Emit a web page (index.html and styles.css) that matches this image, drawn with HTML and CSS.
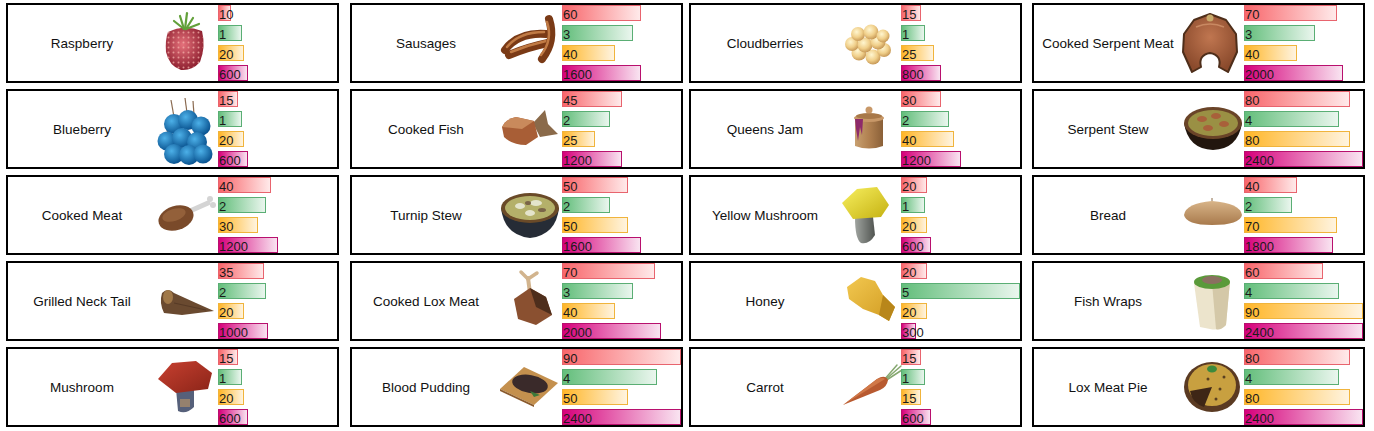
FILE: index.html
```html
<!DOCTYPE html>
<html>
<head>
<meta charset="utf-8">
<title>Food stats</title>
<link rel="stylesheet" href="styles.css">
</head>
<body>
<main class="board">

<!-- Row 1 -->
<section class="card">
  <div class="name">Raspberry</div>
  <div class="pic"><svg viewBox="0 0 62 76">
    <defs>
      <radialGradient id="g-rasp" cx="45%" cy="40%" r="60%"><stop offset="0" stop-color="#e4707a"/><stop offset="1" stop-color="#8e2030"/></radialGradient>
      <pattern id="p-rasp" width="5" height="5" patternUnits="userSpaceOnUse"><circle cx="2.5" cy="2.5" r="1" fill="#f3b0a8"/></pattern>
    </defs>
    <path d="M12 27 Q28 19 46 26 Q50 42 44 57 Q36 66 25 65 Q13 61 10 47 Q9 35 12 27Z" fill="url(#g-rasp)"/>
    <path d="M12 27 Q28 19 46 26 Q50 42 44 57 Q36 66 25 65 Q13 61 10 47 Q9 35 12 27Z" fill="url(#p-rasp)" opacity=".75"/>
    <g stroke="#62a03a" stroke-width="2.2" stroke-linecap="round" fill="none">
      <path d="M28 24 L18 16"/><path d="M28 24 L24 11"/><path d="M29 24 L31 8"/><path d="M30 24 L37 13"/><path d="M30 24 L43 19"/>
    </g>
  </svg></div>
  <div class="bars">
    <div class="bar r" style="width:13.2px">10</div>
    <div class="bar g" style="width:23.8px">1</div>
    <div class="bar y" style="width:26.4px">20</div>
    <div class="bar p" style="width:29.8px">600</div>
  </div>
</section>

<section class="card">
  <div class="name">Sausages</div>
  <div class="pic"><svg viewBox="0 0 62 76">
    <g fill="none" stroke-linecap="round">
      <path d="M5 45 Q18 27 46 29" stroke="#7a3a16" stroke-width="8"/>
      <path d="M7 42 Q19 27 44 27" stroke="#c07a44" stroke-width="2.5"/>
      <path d="M9 50 Q28 42 48 38" stroke="#7a3a16" stroke-width="8"/>
      <path d="M11 47 Q28 40 46 36" stroke="#c07a44" stroke-width="2.5"/>
      <path d="M42 54 Q56 36 49 14" stroke="#7a3a16" stroke-width="8"/>
      <path d="M41 50 Q53 35 47 17" stroke="#c07a44" stroke-width="2.5"/>
    </g>
  </svg></div>
  <div class="bars">
    <div class="bar r" style="width:79.3px">60</div>
    <div class="bar g" style="width:71.4px">3</div>
    <div class="bar y" style="width:52.9px">40</div>
    <div class="bar p" style="width:79.3px">1600</div>
  </div>
</section>

<section class="card">
  <div class="name">Cloudberries</div>
  <div class="pic"><svg viewBox="0 0 62 76">
    <defs>
      <radialGradient id="g-cloud" cx="40%" cy="35%" r="65%"><stop offset="0" stop-color="#fff6d0"/><stop offset=".6" stop-color="#f0cf8a"/><stop offset="1" stop-color="#c89a58"/></radialGradient>
    </defs>
    <g fill="url(#g-cloud)">
      <circle cx="20" cy="48" r="7.5"/><circle cx="34" cy="52" r="7.5"/><circle cx="45" cy="45" r="7"/>
      <circle cx="13" cy="39" r="7"/><circle cx="26" cy="40" r="7.5"/><circle cx="39" cy="37" r="7.5"/>
      <circle cx="19" cy="29" r="7"/><circle cx="32" cy="27" r="7.5"/><circle cx="44" cy="31" r="6.5"/>
    </g>
  </svg></div>
  <div class="bars">
    <div class="bar r" style="width:19.8px">15</div>
    <div class="bar g" style="width:23.8px">1</div>
    <div class="bar y" style="width:33.1px">25</div>
    <div class="bar p" style="width:39.7px">800</div>
  </div>
</section>

<section class="card">
  <div class="name">Cooked Serpent Meat</div>
  <div class="pic"><svg viewBox="0 0 62 76">
    <defs>
      <radialGradient id="g-serp" cx="50%" cy="40%" r="60%"><stop offset="0" stop-color="#c07650"/><stop offset="1" stop-color="#8a4a2c"/></radialGradient>
    </defs>
    <path d="M28 9 L44 15 L54 29 L55 47 L46 67 L37 62 Q40 50 28 48 Q16 50 19 62 L10 67 L1 47 L2 29 L12 15 Z" fill="url(#g-serp)" stroke="#4e2e1a" stroke-width="2" stroke-linejoin="round"/>
    <path d="M14 22 Q28 16 42 22" fill="none" stroke="#d59870" stroke-width="1.5" opacity=".7"/>
    <circle cx="28" cy="13" r="3.5" fill="#c8aa6a"/>
  </svg></div>
  <div class="bars">
    <div class="bar r" style="width:92.6px">70</div>
    <div class="bar g" style="width:71.4px">3</div>
    <div class="bar y" style="width:52.9px">40</div>
    <div class="bar p" style="width:99.2px">2000</div>
  </div>
</section>

<!-- Row 2 -->
<section class="card">
  <div class="name">Blueberry</div>
  <div class="pic"><svg viewBox="0 0 62 76">
    <defs>
      <radialGradient id="g-blue" cx="38%" cy="35%" r="65%"><stop offset="0" stop-color="#4cb0e8"/><stop offset="1" stop-color="#0b5592"/></radialGradient>
    </defs>
    <g stroke="#8a6a50" stroke-width="1.2">
      <path d="M18 26 L15 9"/><path d="M31 22 L29 7"/><path d="M38 24 L37 10"/><path d="M12 42 L9 32"/><path d="M40 48 L38 38"/>
    </g>
    <g fill="url(#g-blue)">
      <circle cx="18" cy="33" r="10"/><circle cx="32" cy="29" r="10"/><circle cx="45" cy="35" r="9.5"/>
      <circle cx="11" cy="50" r="9.5"/><circle cx="26" cy="47" r="10"/><circle cx="41" cy="51" r="10"/>
      <circle cx="18" cy="63" r="10"/><circle cx="33" cy="64" r="10"/><circle cx="47" cy="63" r="9.5"/>
    </g>
  </svg></div>
  <div class="bars">
    <div class="bar r" style="width:19.8px">15</div>
    <div class="bar g" style="width:23.8px">1</div>
    <div class="bar y" style="width:26.4px">20</div>
    <div class="bar p" style="width:29.8px">600</div>
  </div>
</section>

<section class="card">
  <div class="name">Cooked Fish</div>
  <div class="pic"><svg viewBox="0 0 62 76">
    <path d="M33 32 L45 19 L48 33 L58 43 L40 46 Z" fill="#8a6a4a"/>
    <path d="M2 36 Q6 28 16 26 L34 30 L38 46 L26 54 Q12 54 4 46 Z" fill="#a85e36"/>
    <path d="M2 36 Q6 28 16 26 L34 30 L22 38 Z" fill="#c98a5c"/>
  </svg></div>
  <div class="bars">
    <div class="bar r" style="width:59.5px">45</div>
    <div class="bar g" style="width:47.6px">2</div>
    <div class="bar y" style="width:33.1px">25</div>
    <div class="bar p" style="width:59.5px">1200</div>
  </div>
</section>

<section class="card">
  <div class="name">Queens Jam</div>
  <div class="pic"><svg viewBox="0 0 62 76">
    <defs>
      <linearGradient id="g-jam" x1="0" x2="1"><stop offset="0" stop-color="#c8a070"/><stop offset=".5" stop-color="#b08050"/><stop offset="1" stop-color="#8a6038"/></linearGradient>
    </defs>
    <path d="M16 27 L44 27 L44 55 Q30 60 16 55 Z" fill="url(#g-jam)"/>
    <ellipse cx="30" cy="27" rx="15" ry="4" fill="#c89868"/>
    <ellipse cx="30" cy="25" rx="13" ry="3" fill="#a87848"/>
    <circle cx="30" cy="19" r="3.5" fill="#c89868"/>
    <path d="M16 28 L24 28 L23 44 L21 36 L19 50 L17 38 Z" fill="#8e2a6a"/>
  </svg></div>
  <div class="bars">
    <div class="bar r" style="width:39.7px">30</div>
    <div class="bar g" style="width:47.6px">2</div>
    <div class="bar y" style="width:52.9px">40</div>
    <div class="bar p" style="width:59.5px">1200</div>
  </div>
</section>

<section class="card">
  <div class="name">Serpent Stew</div>
  <div class="pic"><svg viewBox="0 0 62 76">
    <path d="M2 32 Q6 58 31 59 Q56 58 60 32 Z" fill="#22160e"/>
    <ellipse cx="31" cy="32" rx="29" ry="16" fill="#6a4428"/>
    <ellipse cx="31" cy="32" rx="25" ry="13" fill="#9a9044"/>
    <g fill="#a8603a">
      <ellipse cx="20" cy="28" rx="5" ry="3"/><ellipse cx="34" cy="25" rx="5" ry="3"/><ellipse cx="42" cy="33" rx="5" ry="3"/><ellipse cx="26" cy="37" rx="5" ry="3"/>
    </g>
  </svg></div>
  <div class="bars">
    <div class="bar r" style="width:105.8px">80</div>
    <div class="bar g" style="width:95.2px">4</div>
    <div class="bar y" style="width:105.8px">80</div>
    <div class="bar p" style="width:119px">2400</div>
  </div>
</section>

<!-- Row 3 -->
<section class="card">
  <div class="name">Cooked Meat</div>
  <div class="pic"><svg viewBox="0 0 62 76">
    <g stroke="#d4d4d4" stroke-linecap="round">
      <path d="M34 34 L52 26" stroke-width="5"/>
    </g>
    <circle cx="54" cy="22" r="3" fill="#d4d4d4"/><circle cx="57" cy="28" r="3" fill="#d4d4d4"/>
    <ellipse cx="20" cy="41" rx="18" ry="12" transform="rotate(-18 20 41)" fill="#7a4a2a"/>
    <ellipse cx="18" cy="38" rx="12" ry="6" transform="rotate(-18 18 38)" fill="#93603a"/>
  </svg></div>
  <div class="bars">
    <div class="bar r" style="width:52.9px">40</div>
    <div class="bar g" style="width:47.6px">2</div>
    <div class="bar y" style="width:39.7px">30</div>
    <div class="bar p" style="width:59.5px">1200</div>
  </div>
</section>

<section class="card">
  <div class="name">Turnip Stew</div>
  <div class="pic"><svg viewBox="0 0 62 76">
    <path d="M1 31 Q4 58 30 61 Q56 58 59 31 Z" fill="#262c36"/>
    <ellipse cx="30" cy="31" rx="29" ry="15" fill="#6a4a28"/>
    <ellipse cx="30" cy="31" rx="25" ry="12" fill="#b4b06a"/>
    <g fill="#e4e4cc">
      <ellipse cx="20" cy="29" rx="5" ry="3"/><ellipse cx="36" cy="26" rx="6" ry="3"/><ellipse cx="30" cy="36" rx="5" ry="3"/>
    </g>
    <g fill="#7a6448"><ellipse cx="28" cy="26" rx="3" ry="2"/><ellipse cx="42" cy="33" rx="4" ry="2"/></g>
  </svg></div>
  <div class="bars">
    <div class="bar r" style="width:66.1px">50</div>
    <div class="bar g" style="width:47.6px">2</div>
    <div class="bar y" style="width:66.1px">50</div>
    <div class="bar p" style="width:79.3px">1600</div>
  </div>
</section>

<section class="card">
  <div class="name">Yellow Mushroom</div>
  <div class="pic"><svg viewBox="0 0 62 76">
    <defs>
      <linearGradient id="g-ymush" x1="0" y1="0" x2="1" y2="1"><stop offset="0" stop-color="#f8f060"/><stop offset="1" stop-color="#c4b010"/></linearGradient>
      <linearGradient id="g-ystem" x1="0" x2="1"><stop offset="0" stop-color="#a0a4a0"/><stop offset="1" stop-color="#505450"/></linearGradient>
    </defs>
    <path d="M16 40 L34 40 L36 58 Q30 68 22 66 Q16 62 16 40Z" fill="url(#g-ystem)"/>
    <path d="M3 26 L18 12 L38 10 L50 28 L42 40 L14 42 Z" fill="url(#g-ymush)"/>
  </svg></div>
  <div class="bars">
    <div class="bar r" style="width:26.4px">20</div>
    <div class="bar g" style="width:23.8px">1</div>
    <div class="bar y" style="width:26.4px">20</div>
    <div class="bar p" style="width:29.8px">600</div>
  </div>
</section>

<section class="card">
  <div class="name">Bread</div>
  <div class="pic"><svg viewBox="0 0 62 76">
    <defs>
      <linearGradient id="g-bread" x1="0" y1="0" x2="0" y2="1"><stop offset="0" stop-color="#d8b488"/><stop offset="1" stop-color="#a87a4c"/></linearGradient>
    </defs>
    <path d="M2 38 Q4 26 30 24 Q58 26 60 38 Q58 48 30 48 Q4 48 2 38 Z" fill="url(#g-bread)"/>
    <path d="M30 24 L30 21" stroke="#8a6a48" stroke-width="1"/>
  </svg></div>
  <div class="bars">
    <div class="bar r" style="width:52.9px">40</div>
    <div class="bar g" style="width:47.6px">2</div>
    <div class="bar y" style="width:92.6px">70</div>
    <div class="bar p" style="width:89.3px">1800</div>
  </div>
</section>

<!-- Row 4 -->
<section class="card">
  <div class="name">Grilled Neck Tail</div>
  <div class="pic"><svg viewBox="0 0 62 76">
    <path d="M6 30 Q12 24 18 30 L40 40 L58 48 L26 52 L8 50 Q3 40 6 30Z" fill="#6a4a30"/>
    <ellipse cx="12" cy="34" rx="5" ry="7" fill="#a07848"/>
    <path d="M18 40 L50 47" stroke="#4a3020" stroke-width="1" opacity=".6"/>
  </svg></div>
  <div class="bars">
    <div class="bar r" style="width:46.3px">35</div>
    <div class="bar g" style="width:47.6px">2</div>
    <div class="bar y" style="width:26.4px">20</div>
    <div class="bar p" style="width:49.6px">1000</div>
  </div>
</section>

<section class="card">
  <div class="name">Cooked Lox Meat</div>
  <div class="pic"><svg viewBox="0 0 62 76">
    <g stroke="#d2b48e" stroke-linecap="round" fill="none">
      <path d="M30 30 L28 15" stroke-width="4"/>
      <path d="M28 16 L21 9" stroke-width="3.5"/>
      <path d="M28 16 L37 10" stroke-width="3.5"/>
    </g>
    <path d="M14 36 L30 25 L46 34 L52 52 L36 62 L18 56 Z" fill="#8a5030"/>
    <path d="M30 25 L46 34 L52 52 L36 44 Z" fill="#4e2e1c"/>
  </svg></div>
  <div class="bars">
    <div class="bar r" style="width:92.6px">70</div>
    <div class="bar g" style="width:71.4px">3</div>
    <div class="bar y" style="width:52.9px">40</div>
    <div class="bar p" style="width:99.2px">2000</div>
  </div>
</section>

<section class="card">
  <div class="name">Honey</div>
  <div class="pic"><svg viewBox="0 0 62 76">
    <defs>
      <linearGradient id="g-honey" x1="0" y1="0" x2="1" y2="1"><stop offset="0" stop-color="#f2c850"/><stop offset="1" stop-color="#d09a20"/></linearGradient>
    </defs>
    <path d="M8 24 L22 14 L36 18 L44 32 L56 44 L50 58 L40 52 L24 46 L10 36 Z" fill="url(#g-honey)"/>
    <path d="M44 32 L56 44 L50 58 L40 52 Z" fill="#b8861a"/>
  </svg></div>
  <div class="bars">
    <div class="bar r" style="width:26.4px">20</div>
    <div class="bar g" style="width:119px">5</div>
    <div class="bar y" style="width:26.4px">20</div>
    <div class="bar p" style="width:14.9px">300</div>
  </div>
</section>

<section class="card">
  <div class="name">Fish Wraps</div>
  <div class="pic"><svg viewBox="0 0 62 76">
    <path d="M12 20 L48 18 L44 62 Q38 68 28 66 L18 64 Z" fill="#ece4cc"/>
    <path d="M30 20 L48 18 L44 62 Q38 68 34 66 Z" fill="#d4c8a8"/>
    <ellipse cx="30" cy="19" rx="18" ry="7" fill="#5a9a3a"/>
    <ellipse cx="30" cy="17" rx="10" ry="4" fill="#8a7060"/>
  </svg></div>
  <div class="bars">
    <div class="bar r" style="width:79.3px">60</div>
    <div class="bar g" style="width:95.2px">4</div>
    <div class="bar y" style="width:119px">90</div>
    <div class="bar p" style="width:119px">2400</div>
  </div>
</section>

<!-- Row 5 -->
<section class="card">
  <div class="name">Mushroom</div>
  <div class="pic"><svg viewBox="0 0 62 76">
    <defs>
      <linearGradient id="g-rmush" x1="0" y1="0" x2="1" y2="1"><stop offset="0" stop-color="#c84030"/><stop offset="1" stop-color="#8a2418"/></linearGradient>
    </defs>
    <path d="M20 40 L38 40 L38 58 Q30 66 22 62 Z" fill="#56607a"/>
    <path d="M24 50 L34 50 L34 58 L24 58 Z" fill="#b0906a" opacity=".7"/>
    <path d="M2 30 L16 14 L40 12 L56 24 L52 40 L20 44 Z" fill="url(#g-rmush)"/>
  </svg></div>
  <div class="bars">
    <div class="bar r" style="width:19.8px">15</div>
    <div class="bar g" style="width:23.8px">1</div>
    <div class="bar y" style="width:26.4px">20</div>
    <div class="bar p" style="width:29.8px">600</div>
  </div>
</section>

<section class="card">
  <div class="name">Blood Pudding</div>
  <div class="pic"><svg viewBox="0 0 62 76">
    <path d="M0 40 L24 18 L58 34 L34 56 Z" fill="#c4904e"/>
    <path d="M0 40 L34 56 L34 58 L0 42 Z" fill="#8a5a2c"/>
    <ellipse cx="30" cy="35" rx="18" ry="9" transform="rotate(10 30 35)" fill="#3a2a2a"/>
    <path d="M30 42 L40 46 L34 48 Z" fill="#3a7a3a"/>
  </svg></div>
  <div class="bars">
    <div class="bar r" style="width:119px">90</div>
    <div class="bar g" style="width:95.2px">4</div>
    <div class="bar y" style="width:66.1px">50</div>
    <div class="bar p" style="width:119px">2400</div>
  </div>
</section>

<section class="card">
  <div class="name">Carrot</div>
  <div class="pic"><svg viewBox="0 0 62 76">
    <g stroke="#86a870" stroke-width="1.5" stroke-linecap="round">
      <path d="M46 31 L62 17"/><path d="M46 32 L63 21"/><path d="M45 31 L58 16"/>
    </g>
    <path d="M4 56 L38 30 Q46 25 49 31 Q48 38 41 41 Z" fill="#b85a30"/>
    <path d="M4 56 L38 30 Q44 28 46 30 Z" fill="#d07848"/>
  </svg></div>
  <div class="bars">
    <div class="bar r" style="width:19.8px">15</div>
    <div class="bar g" style="width:23.8px">1</div>
    <div class="bar y" style="width:19.8px">15</div>
    <div class="bar p" style="width:29.8px">600</div>
  </div>
</section>

<section class="card">
  <div class="name">Lox Meat Pie</div>
  <div class="pic"><svg viewBox="0 0 62 76">
    <ellipse cx="30" cy="38" rx="28" ry="25" fill="#5a3a22"/>
    <ellipse cx="30" cy="36" rx="24" ry="21" fill="#c8a040"/>
    <path d="M30 38 L8 42 Q10 54 22 58 Z" fill="#3e2616"/>
    <g fill="#5a4020"><circle cx="38" cy="40" r="1.5"/><circle cx="26" cy="30" r="1.5"/><circle cx="42" cy="28" r="1.5"/><circle cx="34" cy="50" r="1.5"/></g>
    <ellipse cx="30" cy="20" rx="5" ry="3.5" fill="#3c8a3c"/>
  </svg></div>
  <div class="bars">
    <div class="bar r" style="width:105.8px">80</div>
    <div class="bar g" style="width:95.2px">4</div>
    <div class="bar y" style="width:105.8px">80</div>
    <div class="bar p" style="width:119px">2400</div>
  </div>
</section>

</main>
</body>
</html>
```

FILE: styles.css
```css
html, body {
  margin: 0;
  background: #fff;
}

body {
  padding: 3px 0 0 6px;
  font-family: "Liberation Sans", Arial, sans-serif;
  color: #111;
}

.board {
  display: grid;
  grid-template-columns: 344px 339px 343px 333px;
  grid-auto-rows: 80px;
  row-gap: 6px;
}

.card {
  box-sizing: border-box;
  width: 333px;
  border: 2px solid #000;
  display: grid;
  grid-template-columns: 148px 62px 1fr;
  min-width: 0;
}

.name {
  display: flex;
  align-items: center;
  justify-content: center;
  font-size: 13.5px;
  white-space: nowrap;
}

.pic {
  display: flex;
  overflow: visible;
}

.pic svg {
  width: 62px;
  height: 76px;
  overflow: visible;
}

.bars {
  display: flex;
  flex-direction: column;
  gap: 4px;
  min-width: 0;
}

.bar {
  box-sizing: border-box;
  height: 16px;
  border: 1px solid;
  font-size: 13px;
  line-height: 17px;
  white-space: nowrap;
  color: #1a1a1a;
}

.bar.r {
  border-color: #e8646e;
  background: linear-gradient(90deg, #f8666b, #ffeaea);
}

.bar.g {
  border-color: #5aae74;
  background: linear-gradient(90deg, #63be7b, #eaf6ee);
}

.bar.y {
  border-color: #f0b43c;
  background: linear-gradient(90deg, #ffb628, #fff4e0);
}

.bar.p {
  border-color: #b8106e;
  background: linear-gradient(90deg, #d6007b, #f9e4f1);
}
```
